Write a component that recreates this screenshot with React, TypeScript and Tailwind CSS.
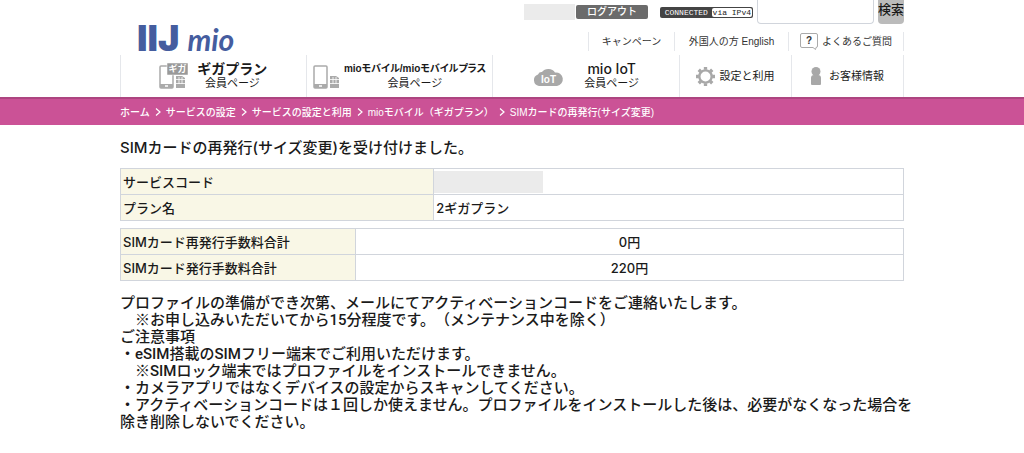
import { useState } from 'react';
import type { ReactNode } from 'react';

const breadcrumbs = [
  'ホーム',
  'サービスの設定',
  'サービスの設定と利用',
  'mioモバイル（ギガプラン）',
  'SIMカードの再発行(サイズ変更)',
];

const notes = [
  'プロファイルの準備ができ次第、メールにてアクティベーションコードをご連絡いたします。',
  '　※お申し込みいただいてから15分程度です。（メンテナンス中を除く）',
  'ご注意事項',
  '・eSIM搭載のSIMフリー端末でご利用いただけます。',
  '　※SIMロック端末ではプロファイルをインストールできません。',
  '・カメラアプリではなくデバイスの設定からスキャンしてください。',
  '・アクティベーションコードは１回しか使えません。プロファイルをインストールした後は、必要がなくなった場合を',
  '除き削除しないでください。',
];

const fees = [
  { label: 'SIMカード再発行手数料合計', value: '0円' },
  { label: 'SIMカード発行手数料合計', value: '220円' },
];

const Phone = () => (
  <>
    <rect x="1" y="3" width="13" height="22" rx="1" fill="#fff" stroke="#aaa" strokeWidth="1.5" />
    <path d="M1 21h13v4H1z" fill="#aaa" />
    <path d="M6 23h3" stroke="#fff" strokeWidth="1.5" />
    <path d="M17 13h6l3 2v10h-9z" fill="#aaa" />
    <path d="M17 16.500h9M17 20.500h9M20 14v7M23 14v7" stroke="#fff" strokeWidth="0.8" />
  </>
);

const PhoneIcon = () => (
  <svg width="27" height="26" viewBox="0 0 27 26" aria-hidden="true">
    <Phone />
  </svg>
);

const GigaPhoneIcon = () => (
  <svg width="30" height="28" viewBox="0 -1 30 28" aria-hidden="true">
    <Phone />
    <rect x="8" y="0" width="21" height="12" fill="#999" stroke="#fff" strokeWidth="0.5" />
    <text x="18.5" y="9" fill="#fff" fontSize="9" fontWeight="700" textAnchor="middle">
      ギガ
    </text>
  </svg>
);

const CloudIcon = () => (
  <svg width="31" height="19" viewBox="0 0 31 19" aria-hidden="true">
    <path
      d="M6 19a6 6 0 0 1-1-11.600A4 4 0 0 1 9 5A7.500 6.500 0 0 1 22 5.500A6.800 6.800 0 1 1 24 19z"
      fill="#a8a8a8"
    />
    <text x="15.5" y="16" fill="#fff" fontSize="10" fontWeight="700" textAnchor="middle">
      IoT
    </text>
  </svg>
);

const GearIcon = () => (
  <svg width="19" height="19" viewBox="0 0 20 20" fill="none" stroke="#a8a8a8" aria-hidden="true">
    <circle cx="10" cy="10" r="6.500" strokeWidth="2.500" />
    <path
      d="M10 0v3M10 17v3M0 10h3M17 10h3M2.900 2.900L5 5M15 15l2.100 2.100M2.900 17.100L5 15M15 5l2.100-2.100"
      strokeWidth="3.500"
    />
  </svg>
);

const PersonIcon = () => (
  <svg width="10" height="18" viewBox="0 0 10 18" fill="#a8a8a8" aria-hidden="true">
    <circle cx="5" cy="4.500" r="4.500" />
    <path d="M3 8h4a3 3 0 0 1 3 3v6a1 1 0 0 1-1 1H1a1 1 0 0 1-1-1v-6a3 3 0 0 1 3-3z" />
  </svg>
);

const QuestionIcon = () => (
  <svg width="18" height="17" viewBox="0 0 18 17" fill="none" stroke="#aaa" aria-hidden="true">
    <path d="M2 0.500h14a1.500 1.500 0 0 1 1.500 1.500v11a1.500 1.500 0 0 1-1.500 1.500l-0.500 2-2.500-2H2a1.500 1.500 0 0 1-1.500-1.500V2A1.500 1.500 0 0 1 2 0.500z" />
    <text x="9" y="11" fill="#333" stroke="none" fontSize="10" fontWeight="700" textAnchor="middle">
      ?
    </text>
  </svg>
);

const Logo = () => (
  <a href="#" className="mt-[22px] ml-[17px] flex h-8 items-baseline gap-2 leading-8 text-[#455d9f]">
    <span className="font-[Inter,sans-serif] text-[36px] font-black">IIJ</span>
    <span className="font-[Lato,sans-serif] text-[30px] font-bold italic">mio</span>
  </a>
);

const NavItem = ({ icon, title, sub }: { icon: ReactNode; title: ReactNode; sub?: string }) => (
  <li className="border-r border-gray-200 first:border-l">
    <a href="#" className="flex h-full items-center justify-center text-[11px] leading-[14px] whitespace-nowrap">
      {icon}
      <span className="text-center">
        {title}
        {sub && <span className="block">{sub}</span>}
      </span>
    </a>
  </li>
);

const Label = ({ children }: { children: ReactNode }) => (
  <th scope="row" className="h-[26px] border border-gray-300 bg-[#f9f7e6] px-[2px] text-left font-medium">
    {children}
  </th>
);

export default function App() {
  const [keyword, setKeyword] = useState('');

  return (
    <div className="min-h-screen bg-white font-['Liberation_Sans','Noto_Sans_CJK_JP',sans-serif] text-[#1a1a1a]" lang="ja">
      <header className="mx-auto max-w-[784px]">
        <div className="flex justify-between">
          <Logo />
          <div className="flex flex-col items-end">
            <div className="flex h-6 items-center">
              <span className="mr-px h-4 w-[51px] bg-[#ebebeb]" />
              <button
                type="button"
                className="mr-3 h-[14px] w-[72px] rounded-xs bg-[#6b6b6b] text-[10px] leading-[14px] font-medium text-white"
              >
                ログアウト
              </button>
              <span className="mr-1 flex h-[11px] w-[93px] items-center rounded-xs bg-[#444] p-px font-['Liberation_Mono',monospace] text-[8px] leading-[9px]">
                <span className="flex-1 text-center text-white">CONNECTED</span>
                <span className="rounded-xs bg-white px-px text-[#222]">via IPv4</span>
              </span>
              <form className="flex" onSubmit={e => e.preventDefault()}>
                <input
                  type="text"
                  aria-label="検索キーワード"
                  value={keyword}
                  onChange={e => setKeyword(e.target.value)}
                  className="mr-1 h-6 w-[117px] rounded-b-sm border border-t-0 border-gray-300 px-1 text-[13px]"
                />
                <button
                  type="submit"
                  className="h-6 w-[26px] rounded-b-sm bg-[#bbb] pb-1 text-[13px] leading-5 font-medium whitespace-nowrap"
                >
                  検索
                </button>
              </form>
            </div>
            <ul className="mt-2 flex h-[19px] text-[10px] leading-[19px] text-[#333]">
              <li className="w-[86px] border-l border-gray-200 text-center">
                <a href="#">キャンペーン</a>
              </li>
              <li className="w-[115px] border-x border-gray-200 text-center">
                <a href="#">外国人の方 English</a>
              </li>
              <li className="w-[115px] border-r border-gray-200">
                <a href="#" className="flex items-center justify-center gap-1">
                  <QuestionIcon />
                  よくあるご質問
                </a>
              </li>
            </ul>
          </div>
        </div>
        <nav>
          <ul className="mt-px grid h-[42px] grid-cols-[5fr_5fr_5fr_3fr_3fr]">
            <NavItem
              icon={<span className="mr-2"><GigaPhoneIcon /></span>}
              title={<span className="block text-[14px] font-bold">ギガプラン</span>}
              sub="会員ページ"
            />
            <NavItem
              icon={<span className="mr-1"><PhoneIcon /></span>}
              title={
                <span className="block text-[10px] font-bold [font-feature-settings:'palt']">
                  mioモバイル/mioモバイルプラス
                </span>
              }
              sub="会員ページ"
            />
            <NavItem
              icon={<span className="mr-5"><CloudIcon /></span>}
              title={<span className="block font-[Inter,sans-serif] text-[14px] font-medium">mio IoT</span>}
              sub="会員ページ"
            />
            <NavItem icon={<span className="mr-1"><GearIcon /></span>} title="設定と利用" />
            <NavItem icon={<span className="mr-2"><PersonIcon /></span>} title="お客様情報" />
          </ul>
        </nav>
      </header>

      <div className="h-7 border-t-2 border-[#ad4580] bg-[#cb5296]">
        <ol className="mx-auto flex h-full max-w-[784px] items-center text-[10px] font-medium text-white">
          {breadcrumbs.map((crumb, i) => (
            <li key={crumb} className="flex items-center whitespace-nowrap">
              {i > 0 && (
                <svg className="mx-[5px]" width="6" height="8" viewBox="0 0 6 8" fill="none" stroke="#fff" aria-hidden="true">
                  <path d="M1 0.500L5 4L1 7.500" strokeWidth="1.200" />
                </svg>
              )}
              <a href="#">{crumb}</a>
            </li>
          ))}
        </ol>
      </div>

      <main className="mx-auto max-w-[784px] pt-[13px] font-[Inter,'Noto_Sans_CJK_JP',sans-serif] font-medium">
        <h1 className="text-[15px] leading-5 font-medium">SIMカードの再発行(サイズ変更)を受け付けました。</h1>

        <table className="mt-[10px] w-full table-fixed border-collapse text-[13px] leading-5">
          <tbody>
            <tr>
              <Label>サービスコード</Label>
              <td className="w-3/5 border border-gray-300">
                <span className="block h-[22px] w-[109px] bg-[#ebebeb]" />
              </td>
            </tr>
            <tr>
              <Label>プラン名</Label>
              <td className="border border-gray-300 px-[2px]">2ギガプラン</td>
            </tr>
          </tbody>
        </table>

        <table className="mt-[7px] w-full table-fixed border-collapse text-[13px] leading-5">
          <tbody>
            {fees.map(fee => (
              <tr key={fee.label}>
                <Label>{fee.label}</Label>
                <td className="w-7/10 border border-gray-300 text-center">{fee.value}</td>
              </tr>
            ))}
          </tbody>
        </table>

        <div className="mt-[14px] font-[Roboto,'Noto_Sans_CJK_JP',sans-serif] text-[15px] leading-[17px] whitespace-nowrap [text-spacing-trim:space-all]">
          {notes.map(note => (
            <p key={note}>{note}</p>
          ))}
        </div>
      </main>
    </div>
  );
}
